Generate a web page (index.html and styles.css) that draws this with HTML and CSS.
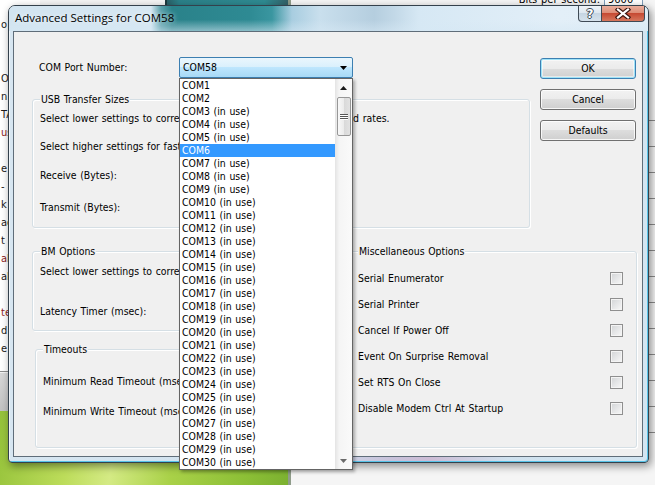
FILE: index.html
```html
<!DOCTYPE html>
<html>
<head>
<meta charset="utf-8">
<title>Advanced Settings for COM58</title>
<link rel="stylesheet" href="styles.css">
</head>
<body>
<div class="win-left">
  <p>o</p><p>&nbsp;</p><p>&nbsp;</p><p>O</p><p>n 1</p><p>TA</p><p class="r">us</p><p>&nbsp;</p><p>e</p><p>-</p><p>k</p><p>ad</p><p>t</p><p class="r">al</p><p>al</p><p>&nbsp;</p><p class="r">te</p><p>d</p><p>e</p>
</div>
<div class="win-left2"></div>
<div class="wall"></div>
<div class="win-teal"></div>
<div class="win-right">
  <div class="bps"><span>Bits per second:</span><span class="bpsbox">9600</span></div>
  <div class="rgrid"></div>
</div>

<div class="dialog">
  <div class="titlebar">
    <span class="title">Advanced Settings for COM58</span>
    <div class="caps">
      <span class="cap help">?</span>
      <span class="cap close"><svg width="16" height="11" viewBox="0 0 16 11"><path d="M3 1.5 L13 9.5 M13 1.5 L3 9.5" stroke="#3a1510" stroke-width="4.4" stroke-linecap="square"/><path d="M3 1.5 L13 9.5 M13 1.5 L3 9.5" stroke="#fff" stroke-width="2.2" stroke-linecap="square"/></svg></span>
    </div>
  </div>
  <div class="client">
    <div class="upper">
      <div class="leftcol">
        <div class="portrow">
          <span class="portlabel">COM Port Number:</span>
          <div class="combo">
            <span class="combo-text">COM58</span>
            <svg class="arrow" width="7" height="4" viewBox="0 0 7 4"><polygon points="0,0 7,0 3.5,4" fill="#000"/></svg>
            <div class="droplist">
              <div class="opts">
                <div class="opt">COM1</div>
                <div class="opt">COM2</div>
                <div class="opt">COM3 (in use)</div>
                <div class="opt">COM4 (in use)</div>
                <div class="opt">COM5 (in use)</div>
                <div class="opt sel">COM6</div>
                <div class="opt">COM7 (in use)</div>
                <div class="opt">COM8 (in use)</div>
                <div class="opt">COM9 (in use)</div>
                <div class="opt">COM10 (in use)</div>
                <div class="opt">COM11 (in use)</div>
                <div class="opt">COM12 (in use)</div>
                <div class="opt">COM13 (in use)</div>
                <div class="opt">COM14 (in use)</div>
                <div class="opt">COM15 (in use)</div>
                <div class="opt">COM16 (in use)</div>
                <div class="opt">COM17 (in use)</div>
                <div class="opt">COM18 (in use)</div>
                <div class="opt">COM19 (in use)</div>
                <div class="opt">COM20 (in use)</div>
                <div class="opt">COM21 (in use)</div>
                <div class="opt">COM22 (in use)</div>
                <div class="opt">COM23 (in use)</div>
                <div class="opt">COM24 (in use)</div>
                <div class="opt">COM25 (in use)</div>
                <div class="opt">COM26 (in use)</div>
                <div class="opt">COM27 (in use)</div>
                <div class="opt">COM28 (in use)</div>
                <div class="opt">COM29 (in use)</div>
                <div class="opt">COM30 (in use)</div>
              </div>
              <div class="sb">
                <div class="sbarrow"><svg width="7" height="4" viewBox="0 0 7 4"><polygon points="0,4 7,4 3.5,0" fill="#1a1a1a"/></svg></div>
                <div class="sbtrack">
                  <div class="thumb"><svg width="8" height="8" viewBox="0 0 8 8"><path d="M0 1.5H8M0 3.5H8M0 5.5H8" stroke="#555" stroke-width="1"/><path d="M0 2.5H8M0 4.5H8M0 6.5H8" stroke="#fff" stroke-width="1"/></svg></div>
                </div>
                <div class="sbarrow"><svg width="7" height="4" viewBox="0 0 7 4"><polygon points="0,0 7,0 3.5,4" fill="#6a6a6a"/></svg></div>
              </div>
            </div>
          </div>
        </div>
        <div class="group usb">
          <span class="gtitle">USB Transfer Sizes</span>
          <div class="line mt6">Select lower settings to correct performance problems at low baud rates.</div>
          <div class="line mt15">Select higher settings for faster performance.</div>
          <div class="line mt16">Receive (Bytes):</div>
          <div class="line mt19">Transmit (Bytes):</div>
        </div>
      </div>
      <div class="btncol">
        <div class="btn def">OK</div>
        <div class="btn">Cancel</div>
        <div class="btn">Defaults</div>
      </div>
    </div>
    <div class="lower">
      <div class="lowerleft">
        <div class="group bm">
          <span class="gtitle">BM Options</span>
          <div class="line mt7">Select lower settings to correct response problems.</div>
          <div class="line mt27">Latency Timer (msec):</div>
        </div>
        <div class="group timeouts">
          <span class="gtitle">Timeouts</span>
          <div class="line mt19">Minimum Read Timeout (msec):</div>
          <div class="line mt17">Minimum Write Timeout (msec):</div>
        </div>
      </div>
      <div class="group misc">
        <span class="gtitle">Miscellaneous Options</span>
        <div class="rows">
          <div class="row"><span>Serial Enumerator</span><span class="chk"></span></div>
          <div class="row"><span>Serial Printer</span><span class="chk"></span></div>
          <div class="row"><span>Cancel If Power Off</span><span class="chk"></span></div>
          <div class="row"><span>Event On Surprise Removal</span><span class="chk"></span></div>
          <div class="row"><span>Set RTS On Close</span><span class="chk"></span></div>
          <div class="row"><span>Disable Modem Ctrl At Startup</span><span class="chk"></span></div>
        </div>
      </div>
    </div>
  </div>
</div>
</body>
</html>
```

FILE: styles.css
```css
* { box-sizing: border-box; margin: 0; padding: 0; }
html, body { width: 655px; height: 485px; overflow: hidden; }
body {
  position: relative;
  background: #f4f4f4;
  font-family: "DejaVu Sans Condensed", "DejaVu Sans", sans-serif;
  font-stretch: condensed;
  font-size: 10.4px;
  line-height: 13px;
  word-spacing: 0.7px;
  color: #000;
}

/* ---------- desktop behind ---------- */
.win-left {
  position: absolute; left: 0; top: 0; width: 40px; height: 372px;
  background: #fff; border-bottom: 1px solid #8d8d8d;
  padding: 16px 0 0 1px;
  font-size: 11px; line-height: 18px; color: #1a1a1a;
  white-space: nowrap; overflow: hidden;
}
.win-left .r { color: #8a1c1c; }
.win-left2 {
  position: absolute; left: 0; top: 373px; width: 40px; height: 38px;
  background: linear-gradient(#d8d8d8, #c2c2c2);
}
.wall {
  position: absolute; left: 0; top: 411px; width: 290px; height: 74px;
  background: linear-gradient(100deg, #95c23a 0%, #bcdc5a 25%, #d4ea84 40%, #a9d148 60%, #8cbf36 85%, #7bb030 100%);
}
.win-teal {
  position: absolute; left: 165px; top: 0; width: 126px; height: 40px;
  background: linear-gradient(90deg, #2a5f66, #2b8189 10%, #2f8b92 80%, #335f66);
  border-left: 2px solid #1d3a3e; border-right: 2px solid #1d3a3e;
}
.win-right {
  position: absolute; left: 288px; top: 0; width: 367px; height: 485px;
  background: #f5f5f5; border-left: 3px solid #8f9c8a;
}
.bps {
  display: flex; justify-content: flex-end; align-items: center; gap: 4px;
  margin-top: -8px; padding-right: 12px;
  font-size: 11px; line-height: 13px;
}
.bpsbox { width: 39px; padding: 0 3px; border: 1px solid #7f9db9; background: #fff; }
.rgrid {
  width: 10px; height: 360px; margin: 88px 0 0 auto;
  background: repeating-linear-gradient(to bottom, transparent 0 25px, #8c8c8c 25px 26px);
}

/* ---------- dialog window ---------- */
.dialog {
  position: absolute; left: 8px; top: 5px; width: 641px; height: 458px;
  display: flex; flex-direction: column;
  border: 1px solid #34414c; border-radius: 7px 7px 4px 4px;
  background: linear-gradient(90deg, #d7e6f1 0%, #d0e1ee 45%, #c8c2da 60%, #cdbcd5 66%, #cfe1ee 78%, #d3e5f1 100%);
  box-shadow: inset 1px 1px 0 rgba(255,255,255,.6), inset -1px -1px 0 #57c3e8, 2px 3px 9px rgba(0,0,0,.45);
}
.titlebar {
  flex: none; height: 25px; display: flex; align-items: flex-start;
  padding-left: 6px; border-radius: 6px 6px 0 0;
  background:
    linear-gradient(to bottom, rgba(214,232,244,0) 55%, rgba(214,232,244,.55) 100%),
    linear-gradient(90deg, #d2e4f0 0, #d6e7f2 142px, #5aa0aa 152px, #2a828a 163px, #2e8a93 240px, #3a96a0 263px, #a8cde0 283px, #c9dfed 311px, #b5cedf 365px, #c2d8e7 385px, #d6e8f4 410px, #e3eff8 550px, #e0edf6 100%);
}
.title {
  font-family: "Open Sans", "Noto Sans", sans-serif; font-stretch: normal;
  font-size: 11.5px; line-height: 16px; margin-top: 4px; word-spacing: 0;
  text-shadow: 0 0 5px rgba(255,255,255,.9);
}
.caps { margin-left: auto; margin-right: 3px; display: flex; height: 16px; }
.cap {
  height: 16px; display: flex; align-items: center; justify-content: center;
  border: 1px solid #3f4a55; border-top: none;
}
.help {
  width: 24px; border-radius: 0 0 0 4px;
  background: linear-gradient(#eef3f8, #dce6ef 50%, #c6d5e2 50%, #d6e2ec);
  color: #fff; font: bold 12px/14px "DejaVu Sans", sans-serif;
  text-shadow: 1px 0 0 #3a4652, -1px 0 0 #3a4652, 0 1px 0 #3a4652, 0 -1px 0 #3a4652;
}
.close {
  width: 43px; border-left: none; border-radius: 0 0 4px 0;
  background: linear-gradient(#eaae9c, #dc8b74 50%, #c64a33 50%, #d6775d);
}

.client {
  flex: none; height: 426px; margin: 0 5px 0 4px;
  border: 1px solid #5f6d79; background: #f0f0f0;
  padding: 25px 0 0 18px;
}
.upper { display: flex; gap: 10px; }
.leftcol { width: 498px; }
.portrow { display: flex; height: 21px; }
.portlabel { width: 147px; padding-left: 7px; margin-top: 3px; line-height: 14px; }

.combo {
  position: relative; width: 174px; height: 21px;
  display: flex; align-items: center; padding: 0 5px 0 3px;
  border: 1px solid #3c7fb1; border-radius: 2px;
  background: linear-gradient(#eaf6fd, #d9f0fc 50%, #bee6fd 50%, #a7d9f5);
}
.combo-text { flex: 1; }
.droplist {
  position: absolute; left: -1px; top: 20px; z-index: 5;
  width: 174px; height: 392px; display: flex;
  border: 1px solid #646464; background: #fff;
  box-shadow: 2px 2px 3px rgba(0,0,0,.3);
}
.opts { flex: 1; }
.opt { height: 13px; line-height: 13px; padding-left: 2px; white-space: nowrap; }
.opt.sel { background: #3399ff; color: #fff; }
.sb {
  width: 17px; display: flex; flex-direction: column;
  background: linear-gradient(90deg, #e4e4e4, #f5f5f5 25%, #fafafa);
}
.sbarrow { height: 17px; flex: none; display: flex; align-items: center; justify-content: center; }
.sbtrack { flex: 1; padding: 1px 1px 0 2px; }
.thumb {
  height: 39px; display: flex; align-items: center; justify-content: center;
  border: 1px solid #979797; border-radius: 2px;
  background: linear-gradient(90deg, #f8f8f8, #ebebeb 50%, #d9d9d9 50%, #e2e2e2);
}

.btncol { width: 96px; display: flex; flex-direction: column; gap: 10px; margin-top: 1px; }
.btn {
  height: 21px; display: flex; align-items: center; justify-content: center;
  border: 1px solid #707070; border-radius: 3px;
  background: linear-gradient(#f2f2f2, #ebebeb 50%, #dddddd 50%, #cfcfcf);
  box-shadow: inset 0 0 0 1px rgba(255,255,255,.8);
}
.btn.def { border-color: #3c7fb1; box-shadow: inset 0 0 0 1px #9fe3f8, inset 0 0 0 2px rgba(255,255,255,.5); }

.group {
  border: 1px solid #d5dfe5; border-radius: 3px;
  box-shadow: inset 1px 1px 0 #fff, 1px 1px 0 #fff;
}
.gtitle {
  display: block; width: max-content; margin: -7px 0 0 7px; padding: 0 1px;
  background: #f0f0f0; line-height: 13px;
}
.line { padding-left: 7px; white-space: nowrap; }
.mt6 { margin-top: 6px; }
.mt7 { margin-top: 7px; }
.mt15 { margin-top: 15px; }
.mt16 { margin-top: 16px; }
.mt17 { margin-top: 17px; }
.mt19 { margin-top: 19px; }
.mt27 { margin-top: 27px; }

.usb { margin-top: 21px; height: 129px; }
.lower { display: flex; gap: 6px; margin-top: 23px; }
.lowerleft { width: 312px; }
.bm { height: 80px; }
.timeouts { height: 99px; margin: 18px 0 0 3px; }
.misc { width: 287px; height: 197px; }
.rows { margin-top: 7px; }
.row {
  height: 26px; display: flex; align-items: center; justify-content: space-between;
  padding: 0 13px 0 7px;
}
.chk {
  width: 13px; height: 13px; border: 1px solid #8f8f8f;
  background: linear-gradient(135deg, #d2d4d6, #f8f8f8);
  box-shadow: inset 0 0 0 1px #f4f4f4;
}
```
